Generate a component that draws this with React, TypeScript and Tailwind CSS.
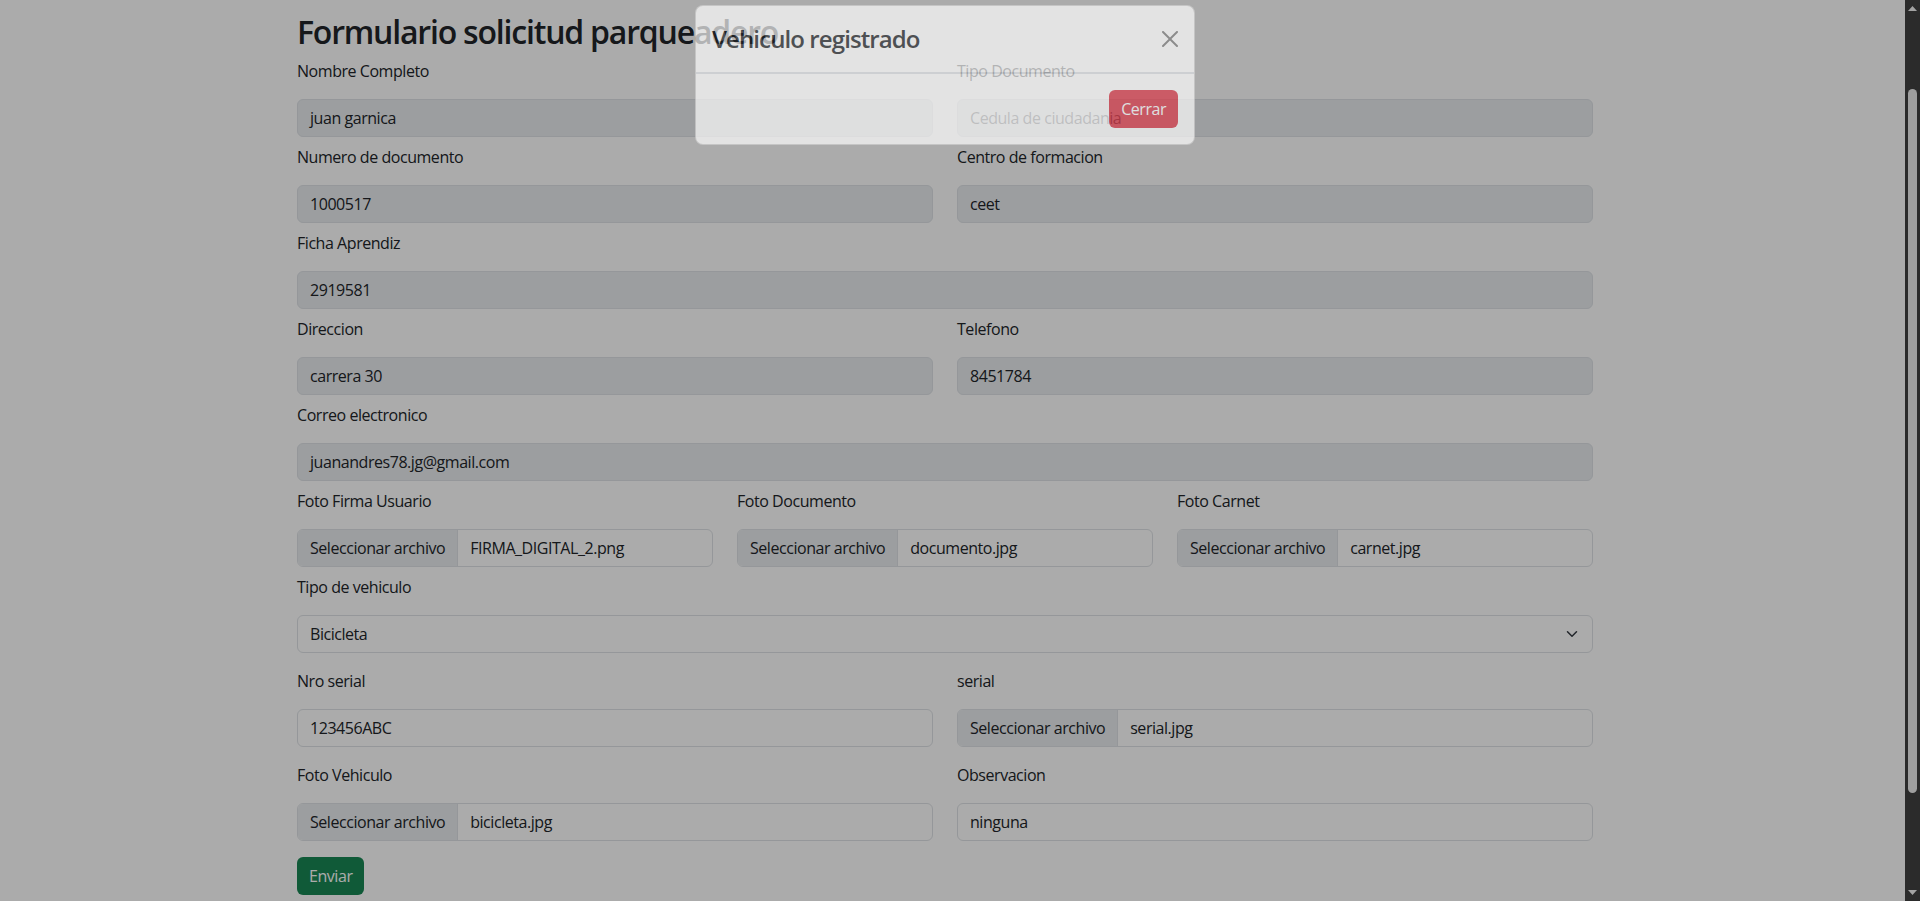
import React from "react";

function Label({ children }: { children: React.ReactNode }) {
  return <div className="h-6 leading-6 text-[16px] text-[#212529] whitespace-nowrap">{children}</div>;
}

function TextBox({ value, disabled, muted }: { value: string; disabled?: boolean; muted?: boolean }) {
  return (
    <div
      className={
        disabled
          ? "h-[38px] rounded-[6px] border border-[#dee2e6] bg-[#e9ecef] px-3 leading-[36px] whitespace-nowrap overflow-hidden"
          : "h-[38px] rounded-[6px] border border-[#dee2e6] bg-white px-3 leading-[36px] whitespace-nowrap overflow-hidden"
      }
    >
      <span className={muted ? "text-[rgba(33,37,41,0.75)]" : "text-[#212529]"}>{value}</span>
    </div>
  );
}

function FileBox({ file }: { file: string }) {
  return (
    <div className="h-[38px] flex rounded-[6px] border border-[#dee2e6] bg-white overflow-hidden whitespace-nowrap">
      <div className="bg-[#e9ecef] px-3 leading-[36px] border-r border-[#dee2e6] text-[#212529]">Seleccionar archivo</div>
      <div className="px-3 leading-[36px] text-[#212529]">{file}</div>
    </div>
  );
}

function SelectBox({ value }: { value: string }) {
  return (
    <div className="h-[38px] flex items-center justify-between rounded-[6px] border border-[#dee2e6] bg-white pl-3 pr-3">
      <span className="leading-[36px] text-[#212529]">{value}</span>
      <svg width="16" height="12" viewBox="0 0 16 16" fill="none">
        <path d="m2 5 6 6 6-6" stroke="#343a40" strokeWidth="2" strokeLinecap="round" strokeLinejoin="round" />
      </svg>
    </div>
  );
}

function Field({ label, children }: { label: string; children: React.ReactNode }) {
  return (
    <div className="flex flex-col gap-4 min-w-0">
      <Label>{label}</Label>
      {children}
    </div>
  );
}

export default function App() {
  return (
    <div className="w-[1920px] h-[901px] overflow-hidden flex bg-white font-['Open_Sans',sans-serif] text-[16px] tracking-[-0.45px] text-[#212529]">
      <div className="relative w-[1905px] h-full">
        <div className="ml-[297px] w-[1296px] pt-[13px] flex flex-col">
          <h2 className="text-[32px] leading-[38.4px] font-semibold tracking-[-1.2px] mb-2 text-[#212529] whitespace-nowrap">
            Formulario solicitud parqueadero
          </h2>

          <div className="grid grid-cols-2 gap-x-6 mb-2">
            <Field label="Nombre Completo">
              <TextBox value="juan garnica" disabled />
            </Field>
            <Field label="Tipo Documento">
              <TextBox value="Cedula de ciudadania" disabled muted />
            </Field>
          </div>

          <div className="grid grid-cols-2 gap-x-6 mb-2">
            <Field label="Numero de documento">
              <TextBox value="1000517" disabled />
            </Field>
            <Field label="Centro de formacion">
              <TextBox value="ceet" disabled />
            </Field>
          </div>

          <div className="mb-2">
            <Field label="Ficha Aprendiz">
              <TextBox value="2919581" disabled />
            </Field>
          </div>

          <div className="grid grid-cols-2 gap-x-6 mb-2">
            <Field label="Direccion">
              <TextBox value="carrera 30" disabled />
            </Field>
            <Field label="Telefono">
              <TextBox value="8451784" disabled />
            </Field>
          </div>

          <div className="mb-2">
            <Field label="Correo electronico">
              <TextBox value="juanandres78.jg@gmail.com" disabled />
            </Field>
          </div>

          <div className="grid grid-cols-3 gap-x-6 mb-2">
            <Field label="Foto Firma Usuario">
              <FileBox file="FIRMA_DIGITAL_2.png" />
            </Field>
            <Field label="Foto Documento">
              <FileBox file="documento.jpg" />
            </Field>
            <Field label="Foto Carnet">
              <FileBox file="carnet.jpg" />
            </Field>
          </div>

          <div className="mb-4">
            <Field label="Tipo de vehiculo">
              <SelectBox value="Bicicleta" />
            </Field>
          </div>

          <div className="grid grid-cols-2 gap-x-6 mb-4">
            <Field label="Nro serial">
              <TextBox value="123456ABC" />
            </Field>
            <Field label="serial">
              <FileBox file="serial.jpg" />
            </Field>
          </div>

          <div className="grid grid-cols-2 gap-x-6 mb-4">
            <Field label="Foto Vehiculo">
              <FileBox file="bicicleta.jpg" />
            </Field>
            <Field label="Observacion">
              <TextBox value="ninguna" />
            </Field>
          </div>

          <div>
            <button className="h-[38px] rounded-[6px] bg-[#198754] px-3 text-white leading-[38px]">Enviar</button>
          </div>
        </div>

        {/* modal backdrop */}
        <div className="absolute inset-0 bg-black/33" />

        {/* modal (fading in) */}
        <div className="absolute left-[695px] top-[5px] w-[500px] rounded-[8px] border border-[rgba(0,0,0,0.175)] bg-white opacity-[0.67]">
          <div className="flex items-center justify-between px-4 py-4 border-b border-[#dee2e6]">
            <h5 className="text-[24px] leading-[34px] font-semibold tracking-[-0.9px] text-[#212529] whitespace-nowrap">Vehiculo registrado</h5>
            <svg width="16" height="16" viewBox="0 0 16 16" className="opacity-50">
              <path
                fill="#000"
                d="M.293.293a1 1 0 0 1 1.414 0L8 6.586 14.293.293a1 1 0 1 1 1.414 1.414L9.414 8l6.293 6.293a1 1 0 0 1-1.414 1.414L8 9.414l-6.293 6.293a1 1 0 0 1-1.414-1.414L6.586 8 .293 1.707a1 1 0 0 1 0-1.414z"
              />
            </svg>
          </div>
          <div className="flex justify-end px-3 py-3 border-t border-[#dee2e6]">
            <button className="m-1 h-[38px] rounded-[6px] bg-[#dc3545] px-3 text-white leading-[38px]">Cerrar</button>
          </div>
        </div>
      </div>

      {/* scrollbar */}
      <div className="w-[15px] h-full bg-[#2b2b2b] flex flex-col">
        <div className="h-[17px] flex items-center justify-center">
          <svg width="9" height="5" viewBox="0 0 9 5">
            <path d="M0 5 L4.5 0 L9 5 Z" fill="#a3a3a3" />
          </svg>
        </div>
        <div className="flex-1 pt-[72px]">
          <div className="ml-[3px] w-[9px] h-[704px] rounded-full bg-[#9f9f9f]" />
        </div>
        <div className="h-[17px] flex items-center justify-center">
          <svg width="9" height="5" viewBox="0 0 9 5">
            <path d="M0 0 L4.5 5 L9 0 Z" fill="#a3a3a3" />
          </svg>
        </div>
      </div>
    </div>
  );
}
